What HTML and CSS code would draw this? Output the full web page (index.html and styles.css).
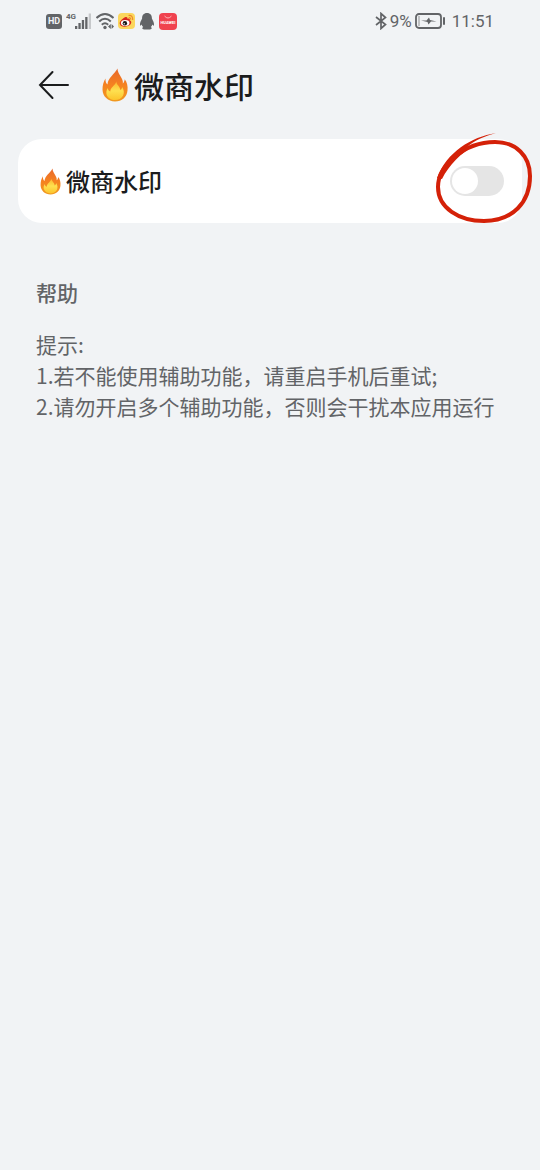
FILE: index.html
```html
<!DOCTYPE html>
<html lang="zh-CN">
<head>
<meta charset="utf-8">
<meta name="viewport" content="width=device-width, initial-scale=1">
<title>微商水印</title>
<link rel="stylesheet" href="styles.css">
</head>
<body>
<svg class="defs" width="0" height="0" aria-hidden="true">
  <defs>
    <linearGradient id="flame-outer" x1="0" y1="0" x2="0" y2="1">
      <stop offset="0" stop-color="#e8682c"/>
      <stop offset=".5" stop-color="#f58220"/>
      <stop offset="1" stop-color="#f09a20"/>
    </linearGradient>
    <linearGradient id="flame-inner" x1="0" y1="0" x2="0" y2="1">
      <stop offset="0" stop-color="#fbb52d"/>
      <stop offset=".5" stop-color="#fee050"/>
      <stop offset="1" stop-color="#fcc42c"/>
    </linearGradient>
    <symbol id="flame" viewBox="0 0 26 34">
      <path fill="url(#flame-outer)" d="M15.500 .5C15.500 4.500 18.500 7.500 20 11C20.800 12.600 21 14 20.800 15.500C22 14.600 22.600 12.800 22.700 11.300C25 14 26 18 25.500 22.500C25 29 20 33.500 13 33.500C6 33.500 .8 28.500 .5 21.800C.4 17.500 1.500 13.500 3.500 10.500C3.300 13.500 4 15.500 5.500 16.500C5.800 9.500 12.500 6.500 15.500 .5Z"/>
      <path fill="url(#flame-inner)" d="M14.300 13.500C14.400 17 18 18 18.300 22C19.300 21.500 19.900 20.600 20.200 19C22 22 22.400 25 21 27.700C19.500 30.500 16.500 32 13 32C9 32 5.600 30 4.600 26.500C4 24.500 4.500 22 5.700 20C6 21.800 6.800 23 8.300 23.600C8.300 19.200 13.300 17.500 14.300 13.500Z"/>
    </symbol>
  </defs>
</svg>

<div class="status">
  <div class="status-group">
    <span class="hd">HD</span>
    <svg class="signal" width="26" height="18" viewBox="0 0 26 18" role="img" aria-label="4G">
      <text class="signal-label" x="0" y="7">4G</text>
      <g fill="#626467"><rect x="9" y="14" width="2.300" height="3"/><rect x="12.400" y="11" width="2.300" height="6"/><rect x="15.800" y="8" width="2.300" height="9"/><rect x="19.200" y="5" width="2.300" height="12"/></g>
      <rect x="22.700" y="1.500" width="2.300" height="15.500" fill="#c6c8ca"/>
    </svg>
    <svg class="wifi" width="18" height="18" viewBox="0 0 18 18" role="img" aria-label="Wi-Fi">
      <g fill="none" stroke="#626467" stroke-width="2"><path d="M.5 6Q9-2 17.500 6"/><path d="M3.200 9.500Q9 4 14.800 9.500"/><path d="M5.800 12.800Q9 9.800 12.200 12.800"/></g>
      <circle cx="9" cy="15.500" r="1.700" fill="#626467"/>
      <path d="M12 14.500L14.800 12V17ZM15.600 12V17L18 14.500Z" fill="#626467"/>
    </svg>
    <svg class="weibo" width="17" height="16" viewBox="0 0 17 16" role="img" aria-label="微博">
      <rect width="17" height="16" rx="4" fill="#fbd65c"/>
      <path d="M7 4.200C9 3.400 9.700 4.500 9.300 5.700C11.500 5 12.200 6 11.700 7.200C14 8 13.600 10.700 11.500 12.300C8.500 14.500 2 14.300 1.700 10.500C1.500 8.500 4.500 5.200 7 4.200Z" fill="#d9281e"/>
      <ellipse cx="7.200" cy="10" rx="4.300" ry="3" fill="#fff"/>
      <circle cx="6.900" cy="10.200" r="2.200" fill="#1c1717"/>
      <circle cx="6.200" cy="10.700" r=".7" fill="#fff"/>
      <path d="M10.500 2.500Q15 2 14.700 7M10.800 4.700Q12.900 4.500 12.700 6.600" fill="none" stroke="#ee8a2a" stroke-width="1.200"/>
    </svg>
    <svg class="qq" width="16" height="18" viewBox="0 0 16 18" role="img" aria-label="QQ">
      <path fill="#626467" d="M8 1C4.700 1 3 3.300 3.100 6.500C2 8.700 .7 10.800 1 13.300C1.300 14 2 13.500 2.600 12.600C2.900 13.700 3.500 14.400 4.200 15C2.600 15.700 3 17.300 5 17.400H11C13 17.300 13.400 15.700 11.800 15C12.500 14.400 13.100 13.700 13.400 12.600C14 13.500 14.700 14 15 13.300C15.300 10.800 14 8.700 12.900 6.500C13 3.300 11.300 1 8 1Z"/>
    </svg>
    <svg class="store" width="18" height="17" viewBox="0 0 18 17" role="img" aria-label="HUAWEI">
      <rect width="18" height="17" rx="4" fill="#f0424f"/>
      <path d="M5.500 3Q9 7 12.500 3" fill="none" stroke="#fbb5b9"/>
      <text class="store-label" x="9" y="11" text-anchor="middle">HUAWEI</text>
    </svg>
  </div>
  <div class="status-group status-right">
    <svg class="bluetooth" width="12" height="18" viewBox="0 0 12 18" role="img" aria-label="蓝牙">
      <path d="M1 5L10.500 12.500L6 16.500V1.500L10.500 5.500L1 13" fill="none" stroke="#626467" stroke-width="1.700"/>
    </svg>
    <span class="percent">9%</span>
    <svg class="battery" width="31" height="18" viewBox="0 0 31 18" role="img" aria-label="充电中">
      <rect x="1" y="2" width="25" height="14" rx="3" fill="none" stroke="#626467" stroke-width="1.800"/>
      <rect x="3" y="4" width="2" height="10" fill="#c0c2c4"/>
      <path d="M6 8.500H11.500L14 5.500L15 8L21.500 9.500H16L13.500 12.500L12.500 10Z" fill="#626467"/>
      <rect x="28" y="5" width="2" height="8" rx="1" fill="#626467"/>
    </svg>
    <time class="clock">11:51</time>
  </div>
</div>

<header class="header">
  <button class="back" type="button" aria-label="返回">
    <svg width="32" height="30" viewBox="0 0 32 30"><path d="M30 15H2M14.500 2L2 15L14.500 28" fill="none" stroke="#1b1c1d" stroke-width="2" stroke-linecap="round"/></svg>
  </button>
  <h1 class="title"><svg class="title-flame" aria-hidden="true"><use href="#flame"/></svg>微商水印</h1>
</header>

<main class="content">
  <section class="card">
    <label class="card-label" for="watermark"><svg class="card-flame" aria-hidden="true"><use href="#flame"/></svg>微商水印</label>
    <div class="switch-area">
      <input class="switch" id="watermark" type="checkbox" role="switch">
      <svg class="marker" width="115" height="105" viewBox="0 0 115 105" aria-hidden="true">
        <path d="M70 17C91 17 105 31 105 51C105 77 88 96 59 96C34 96 13 83 13 62C13 42 38 17 70 17Z" fill="none" stroke="#d42108" stroke-width="4"/>
        <path d="M71 8C46 12 22 27 12 53L17 54C24 40 36 28 50 20L42 22C50 15 60 11 71 8Z" fill="#d42108"/>
      </svg>
    </div>
  </section>

  <section class="help">
    <h2 class="help-title">帮助</h2>
    <p class="help-text">提示:<br>1.若不能使用辅助功能，请重启手机后重试;<br>2.请勿开启多个辅助功能，否则会干扰本应用运行</p>
  </section>
</main>
</body>
</html>
```

FILE: styles.css
```css
* {
  box-sizing: border-box;
}

body {
  margin: 0;
  min-height: 100vh;
  background: #f1f3f5;
  color: #1b1c1d;
  font-family: "Noto Sans CJK SC", sans-serif;
}

svg {
  display: block;
  flex: none;
}

.defs {
  position: absolute;
}

.status {
  display: flex;
  justify-content: space-between;
  align-items: center;
  height: 42px;
  padding: 0 46px;
  color: #626467;
}

.status-group {
  display: flex;
  align-items: center;
  gap: 4px;
}

.status-right {
  gap: 3px;
}

.hd {
  width: 16px;
  border-radius: 3px;
  background: #626467;
  color: #f1f3f5;
  font: bold 9px/15px Roboto, sans-serif;
  text-align: center;
}

.signal-label {
  fill: #626467;
  font: bold 8px Roboto, sans-serif;
}

.store-label {
  fill: #fff;
  font: bold 4px Roboto, sans-serif;
}

.percent,
.clock {
  font-family: Roboto, sans-serif;
  font-size: 17px;
  line-height: 24px;
}

.clock {
  margin-left: 3px;
}

.header {
  display: flex;
  align-items: center;
  gap: 32px;
  height: 85px;
  padding: 0 38px;
}

.back {
  padding: 0;
  border: 0;
  background: none;
}

.title {
  display: flex;
  align-items: center;
  gap: 6px;
  margin: 0;
  font-size: 30px;
  font-weight: 500;
  line-height: 44px;
}

.title-flame {
  width: 26px;
  height: 34px;
}

.content {
  padding: 12px 18px;
}

.card {
  display: flex;
  align-items: center;
  justify-content: space-between;
  padding: 24px 18px 24px 22px;
  border-radius: 24px;
  background: #fff;
}

.card-label {
  display: flex;
  align-items: center;
  gap: 5px;
  font-size: 24px;
  font-weight: 500;
  line-height: 36px;
}

.card-flame {
  width: 21px;
  height: 27px;
}

.switch-area {
  position: relative;
}

.switch {
  display: flex;
  align-items: center;
  appearance: none;
  width: 54px;
  height: 30px;
  margin: 0;
  padding: 2px;
  border-radius: 15px;
  background: #e5e5e5;
}

.switch::before {
  content: "";
  width: 26px;
  height: 26px;
  border-radius: 50%;
  background: #fff;
}

.switch:checked {
  justify-content: flex-end;
  background: #0a59f7;
}

.marker {
  position: absolute;
  top: -41px;
  left: -25px;
  pointer-events: none;
}

.help {
  padding: 54px 18px;
  color: #626467;
  font-size: 21px;
  line-height: 31px;
}

.help-title {
  margin: 0 0 21px;
  font-size: 21px;
  font-weight: 500;
}

.help-text {
  margin: 0;
}
```
